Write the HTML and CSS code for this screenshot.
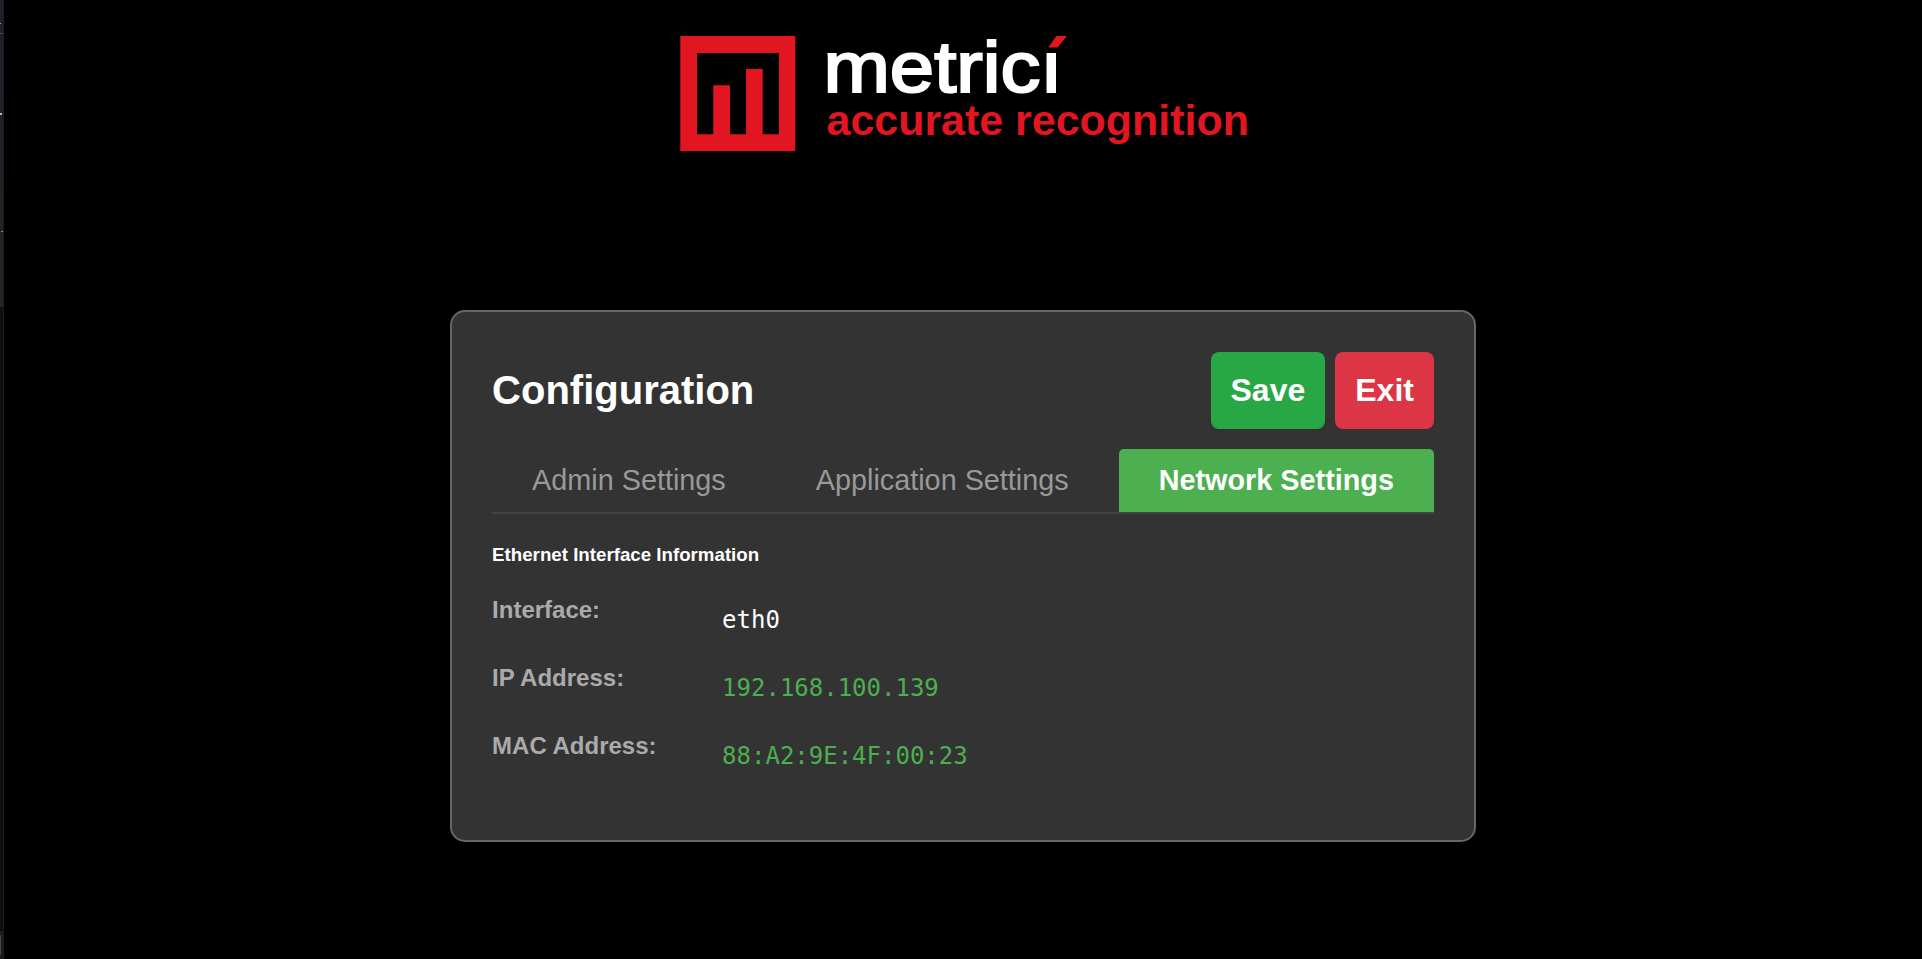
FILE: index.html
```html
<!DOCTYPE html>
<html lang="en">
<head>
  <meta charset="UTF-8">
  <meta name="viewport" content="width=device-width, initial-scale=1.0">
  <title>Metrici Configuration</title>
  <link rel="stylesheet" href="styles.css">
</head>
<body>
  <!-- Side strip -->
  <div class="side-strip">
    <span class="strip-top"></span>
    <span class="strip-middle"></span>
    <span class="strip-bottom"><i class="strip-handle"></i></span>
  </div>

  <main class="page">
    <!-- Logo -->
    <svg class="logo" viewBox="0 0 570 116" role="img" aria-label="metrici accurate recognition">
      <path class="logo-red" fill-rule="evenodd" d="M2.3 0H117.3V115H2.3ZM19 17V98.3H35.3V49.3H52V98.3H68V33H84.7V98.3H101V17Z"/>
      <text class="logo-name" x="145.5" y="55.6" textLength="239" lengthAdjust="spacingAndGlyphs">metricı</text>
      <polygon class="logo-red" points="370.3,11.6 378.3,0 389,0 379.5,11.6"/>
      <text class="logo-tagline" x="148.5" y="98.5" textLength="422.5">accurate recognition</text>
    </svg>

    <!-- Configuration panel -->
    <div class="container">
      <header class="header">
        <h1>Configuration</h1>
        <div class="buttons">
          <button class="btn save">Save</button>
          <button class="btn exit">Exit</button>
        </div>
      </header>

      <nav class="tabs">
        <button class="tab">Admin Settings</button>
        <button class="tab">Application Settings</button>
        <button class="tab active">Network Settings</button>
      </nav>

      <section class="network">
        <h3>Ethernet Interface Information</h3>
        <div class="info-row">
          <span class="label">Interface:</span>
          <span class="value">eth0</span>
        </div>
        <div class="info-row">
          <span class="label">IP Address:</span>
          <span class="value highlight">192.168.100.139</span>
        </div>
        <div class="info-row">
          <span class="label">MAC Address:</span>
          <span class="value highlight">88:A2:9E:4F:00:23</span>
        </div>
      </section>
    </div>
  </main>
</body>
</html>
```
FILE: styles.css
```css
* {
  margin: 0;
  padding: 0;
  box-sizing: border-box;
}

body {
  display: flex;
  height: 100vh;
  background-color: #000;
  color: #fff;
  font-family: 'Liberation Sans', Arial, sans-serif;
  overflow: hidden;
}

/* Side strip */
.side-strip {
  display: flex;
  flex-direction: column;
  width: 4px;
  border-right: 1px solid #1c1c1c;
}

.strip-top {
  height: 307px;
  background:
    linear-gradient(#8fa3b5, #8fa3b5) 0 23px / 1px 1px no-repeat,
    linear-gradient(#45505e, #45505e) 0 33px / 3px 1px no-repeat,
    linear-gradient(#a9bdd0, #a9bdd0) 0 113px / 2px 2px no-repeat,
    linear-gradient(#7f8fa3, #7f8fa3) 1px 231px / 2px 1px no-repeat,
    linear-gradient(#1d1f29, #20222a 50%, #262626);
}

.strip-middle {
  flex: 1;
  background-color: #130c14;
}

.strip-bottom {
  height: 28px;
  padding-top: 4px;
  background-color: #1c1c1c;
}

.strip-handle {
  display: block;
  width: 1px;
  height: 20px;
  background-color: #444;
}

.page {
  flex: 1;
  display: flex;
  flex-direction: column;
  align-items: center;
  padding-top: 36px;
}

/* Logo */
.logo {
  width: 570px;
  height: 116px;
  margin-bottom: 158px;
  overflow: visible;
}

.logo-red {
  fill: #e11621;
}

.logo-name {
  fill: #fff;
  stroke: #fff;
  stroke-width: 2.2px;
  font-size: 73px;
}

.logo-tagline {
  fill: #e11621;
  font-size: 43px;
  font-weight: bold;
}

/* Panel */
.container {
  padding: 40px;
  background-color: #333;
  border: 2px solid #666;
  border-radius: 15px;
}

.header {
  display: flex;
  justify-content: space-between;
  align-items: center;
  margin-bottom: 20px;
}

.header h1 {
  font-size: 40px;
}

.buttons {
  display: flex;
  gap: 10px;
}

button {
  border: none;
  font-family: inherit;
  cursor: pointer;
}

.btn {
  padding: 20px;
  border-radius: 8px;
  color: #fff;
  font-size: 32px;
  font-weight: bold;
}

.save {
  background-color: #28a745;
}

.exit {
  background-color: #dc3545;
}

/* Tabs */
.tabs {
  display: flex;
  gap: 10px;
  margin-bottom: 30px;
  border-bottom: 2px solid #444;
}

.tab {
  padding: 15px 40px;
  background: none;
  border-radius: 5px 5px 0 0;
  color: #999;
  font-size: 28.8px;
}

.tab.active {
  background-color: #4caf50;
  color: #fff;
  font-weight: bold;
}

/* Network info */
.network h3 {
  margin-bottom: 30px;
  font-size: 18.72px;
}

.info-row {
  display: flex;
  gap: 20px;
  margin-bottom: 20px;
  font-size: 24px;
}

.label {
  width: 200px;
  color: #aaa;
  font-weight: bold;
}

.value {
  padding: 10px;
  font-family: 'DejaVu Sans Mono', monospace;
}

.highlight {
  color: #4caf50;
}
```
